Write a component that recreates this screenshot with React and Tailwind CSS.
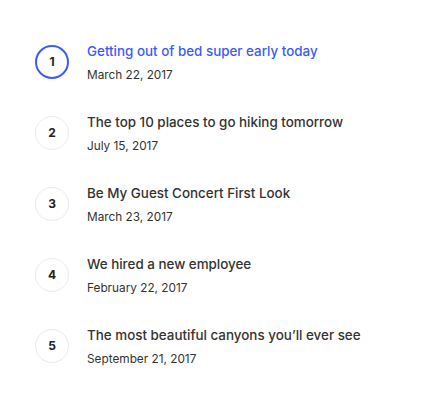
import React from 'react'

const posts = [
  { title: 'Getting out of bed super early today', date: 'March 22, 2017', active: true },
  { title: 'The top 10 places to go hiking tomorrow', date: 'July 15, 2017' },
  { title: 'Be My Guest Concert First Look', date: 'March 23, 2017' },
  { title: 'We hired a new employee', date: 'February 22, 2017' },
  { title: 'The most beautiful canyons you’ll ever see', date: 'September 21, 2017' },
]

const App = () => {
  return (
    <div className="w-[426px] h-[409px] bg-white pl-[35px] pt-[40px] font-['Inter',sans-serif]">
      <ul className="flex flex-col gap-[27px]">
        {posts.map((post, index) => (
          <li key={index} className="flex items-center gap-[18px] h-[44px]">
            <div
              className={`w-[34px] h-[34px] shrink-0 rounded-full flex items-center justify-center text-[12px] font-bold text-[#222] ${
                post.active ? 'border-2 border-[#3b5bfb]' : 'border border-[#ebebeb]'
              }`}
            >
              {index + 1}
            </div>
            <div className="flex flex-col">
              <p
                className={`text-[13.4px] leading-[20px] font-medium ${
                  post.active ? 'text-[#3b5bfb]' : 'text-[#333]'
                }`}
              >
                {post.title}
              </p>
              <p className="text-[11.8px] leading-[18px] mt-[5px] text-[#333]">{post.date}</p>
            </div>
          </li>
        ))}
      </ul>
    </div>
  )
}

export default App
